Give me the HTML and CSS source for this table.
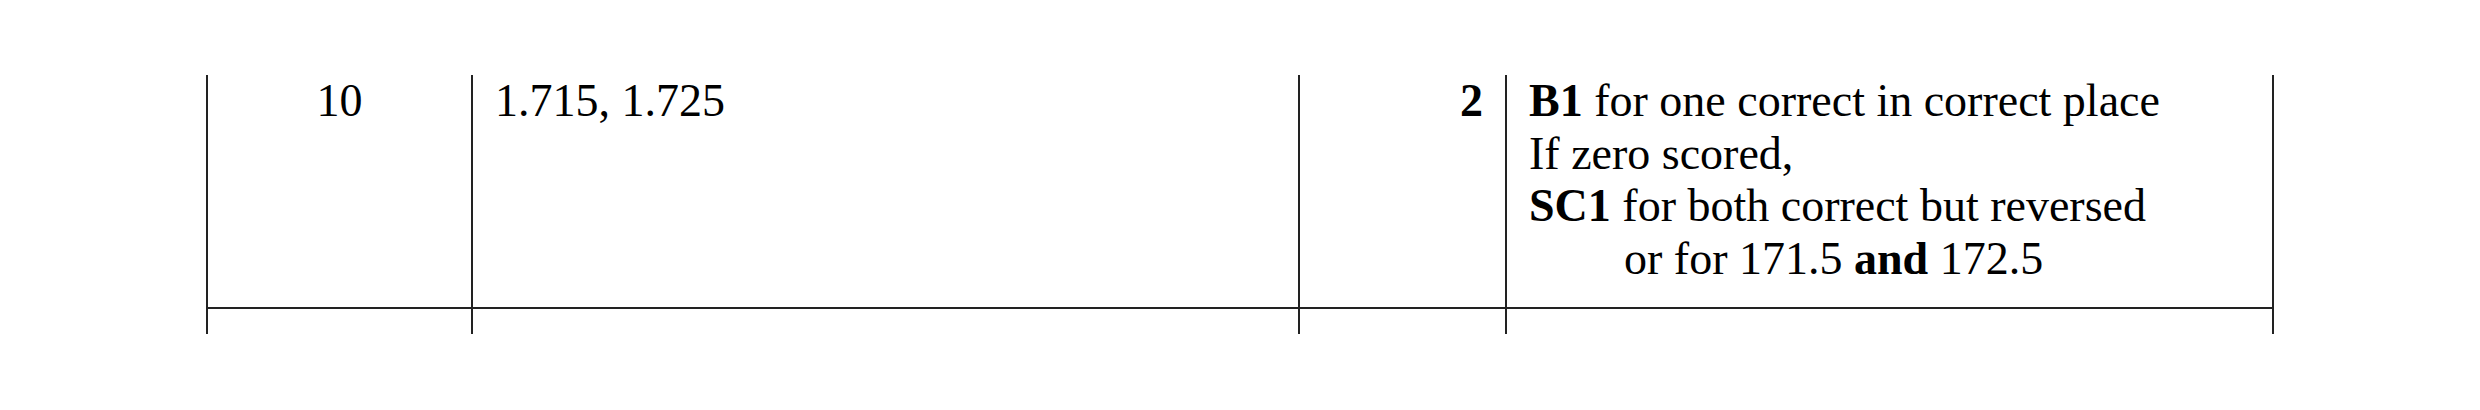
FILE: index.html
```html
<!DOCTYPE html>
<html lang="en">
<head>
<meta charset="utf-8">
<title>Mark scheme row</title>
<link rel="stylesheet" href="styles.css">
</head>
<body>
<div class="scheme">
  <div class="cell cell-q row-main">10</div>
  <div class="cell cell-ans row-main">1.715, 1.725</div>
  <div class="cell cell-mark row-main"><b>2</b></div>
  <div class="cell cell-notes row-main">
    <div class="line"><b>B1</b> for one correct in correct place</div>
    <div class="line">If zero scored,</div>
    <div class="line"><b>SC1</b> for both correct but reversed</div>
    <div class="line indent">or for 171.5 <b>and</b> 172.5</div>
  </div>
  <div class="cell cell-q row-next"></div>
  <div class="cell cell-ans row-next"></div>
  <div class="cell cell-mark row-next"></div>
  <div class="cell cell-notes row-next"></div>
</div>
</body>
</html>
```

FILE: styles.css
```css
html, body {
  margin: 0;
  padding: 0;
  background: #ffffff;
}

body {
  font-family: "Liberation Serif", "Times New Roman", serif;
  font-size: 46px;
  line-height: 52.5px;
  color: #000000;
}

.scheme {
  display: grid;
  grid-template-columns: 265px 827px 207px 769px;
  margin: 75px 0 0 206px;
  width: max-content;
}

.cell {
  box-sizing: border-box;
  border-left: 2px solid #222222;
}

.row-main {
  height: 234px;
  border-bottom: 2px solid #222222;
}

.row-next {
  height: 25px;
}

.cell-q {
  text-align: center;
}

.cell-ans {
  padding-left: 22px;
}

.cell-mark {
  text-align: right;
  padding-right: 22px;
}

.cell-notes {
  padding-left: 22px;
  border-right: 2px solid #222222;
}

.indent {
  padding-left: 95px;
}

b {
  font-weight: bold;
}
```
